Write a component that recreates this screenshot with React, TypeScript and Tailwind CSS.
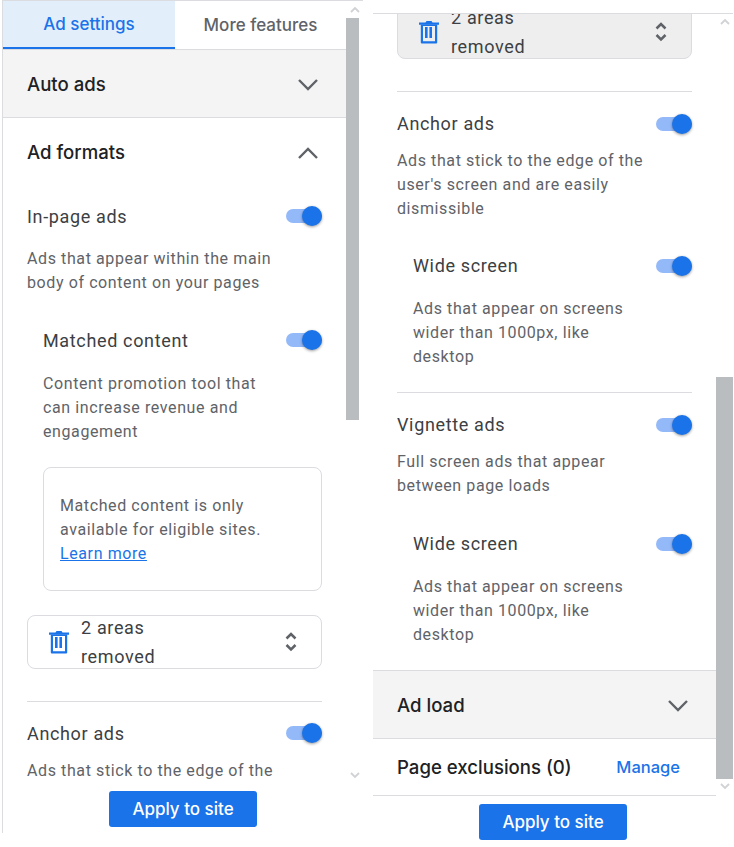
const heading = "font-['Inter',sans-serif] text-[18.6px] font-medium text-[#202124]"

function Chevron({ up = false }: { up?: boolean }) {
  return (
    <svg width="24" height="24" viewBox="0 0 24 24" fill="none" stroke="#5f6368" strokeWidth="2.4">
      <path d={up ? 'M3 17l9-9 9 9' : 'M3 8l9 9 9-9'} />
    </svg>
  )
}

function Toggle() {
  return (
    <div className="relative h-[14px] w-[36px] shrink-0 rounded-full bg-[#94b9f9]">
      <div className="absolute left-[16px] top-[-3px] h-[20px] w-[20px] rounded-full bg-[#1a73e8] shadow-[0_1px_3px_rgba(0,0,0,0.4)]" />
    </div>
  )
}

function ToggleRow({ label, className = '' }: { label: string; className?: string }) {
  return (
    <div className={`flex items-center justify-between font-['Roboto',sans-serif] text-[18px] tracking-[0.65px] text-[#3c4043] ${className}`}>
      <span>{label}</span>
      <Toggle />
    </div>
  )
}

function Desc({ children, className = '' }: { children: React.ReactNode; className?: string }) {
  return (
    <p className={`font-['Roboto',sans-serif] text-[16px] leading-[24px] tracking-[0.6px] text-[#5f6368] ${className}`}>
      {children}
    </p>
  )
}

function AreasSelect({ className = '' }: { className?: string }) {
  return (
    <div className={`flex h-[54px] items-center overflow-hidden rounded-[8px] border border-[#dadce0] pl-[20px] pr-[24px] ${className}`}>
      <svg width="22" height="24" viewBox="0 0 22 24" className="shrink-0" fill="#1a73e8">
        <path d="M1 2.500h6.500L8.500 1h5l1 1.500H21v2.200H1z" />
        <path d="M2.800 4.500h16.400V22.500a1 1 0 0 1-1 1H3.800a1 1 0 0 1-1-1zM5 6V21.300h12V6z" fillRule="evenodd" />
        <path d="M7 7h2.600v11H7zM11.400 7h2.600v11h-2.600z" />
      </svg>
      <div className="ml-[11px] w-[110px] font-['Roboto',sans-serif] text-[18px] leading-[29px] tracking-[0.65px] text-[#3c4043]">
        2 areas removed
      </div>
      <svg width="12" height="20" viewBox="0 0 12 20" className="ml-auto shrink-0" fill="none" stroke="#5f6368" strokeWidth="2.500">
        <path d="M1.500 6.500L6 2l4.500 4.500M1.500 13L6 17.500 10.500 13" />
      </svg>
    </div>
  )
}

function ApplyButton() {
  return (
    <button className="flex h-[36px] w-[148px] items-center justify-center rounded-[3px] bg-[#1a73e8] pt-[1px] font-['Inter',sans-serif] text-[17px] font-medium text-white">
      Apply to site
    </button>
  )
}

function Arrow({ up = false }: { up?: boolean }) {
  return (
    <svg width="12" height="8" viewBox="0 0 12 8" fill="none" stroke="#d0d2d5" strokeWidth="1.800">
      <path d={up ? 'M2 6l4-4 4 4' : 'M2 2l4 4 4-4'} />
    </svg>
  )
}

function LeftPanel() {
  return (
    <div className="ml-[2px] flex h-[833px] w-[361px] flex-col border-l border-t border-[#dadce0]">
      <div className="flex h-[782px] overflow-hidden">
        <div className="w-[343px] shrink-0">
          <div className="flex h-[49px] border-b border-[#dadce0] font-['Inter',sans-serif] text-[17px] font-medium">
            <div className="flex w-[172px] items-center justify-center border-b-2 border-[#1a73e8] bg-[#e3eefb] pt-[2px] text-[#1a73e8]">Ad settings</div>
            <div className="flex flex-1 items-center justify-center pt-[2px] text-[#5f6368]">More features</div>
          </div>
          <div className={`flex h-[68px] items-center justify-between border-b border-[#dadce0] bg-[#f4f4f4] pl-[24px] pr-[26px] ${heading}`}>
            <span className="pt-[2px]">Auto ads</span>
            <Chevron />
          </div>
          <div className="px-[24px]">
            <div className={`flex items-center justify-between pr-[2px] pt-[21px] ${heading}`}>
              <span>Ad formats</span>
              <Chevron up />
            </div>
            <ToggleRow label="In-page ads" className="mt-[36px]" />
            <Desc className="mt-[17px] pr-[24px]">Ads that appear within the main body of content on your pages</Desc>
            <div className="pl-[16px]">
              <ToggleRow label="Matched content" className="mt-[32px]" />
              <Desc className="mt-[18px] pr-[50px]">Content promotion tool that can increase revenue and engagement</Desc>
              <div className="mt-[23px] h-[124px] rounded-[8px] border border-[#dadce0] px-[16px] pt-[26px]">
                <Desc className="pr-[30px]">
                  Matched content is only available for eligible sites.{' '}
                  <span className="text-[#1a73e8] underline">Learn more</span>
                </Desc>
              </div>
            </div>
            <AreasSelect className="mt-[24px]" />
            <div className="mt-[32px] border-t border-[#dadce0]" />
            <ToggleRow label="Anchor ads" className="mt-[18px]" />
            <Desc className="mt-[12px]">Ads that stick to the edge of the</Desc>
          </div>
        </div>
        <div className="flex w-[17px] shrink-0 flex-col items-center">
          <div className="flex h-[17px] items-center"><Arrow up /></div>
          <div className="h-[402px] w-[13px] shrink-0 self-start bg-[#babdc0]" />
          <div className="mt-[351px]"><Arrow /></div>
        </div>
      </div>
      <div className="flex justify-center pt-[8px]">
        <ApplyButton />
      </div>
    </div>
  )
}

function RightPanel() {
  return (
    <div className="ml-[10px] mt-[13px] flex w-[360px] flex-col border-t border-[#dadce0]">
      <div className="flex h-[782px] overflow-hidden">
        <div className="w-[343px] shrink-0">
          <div className="h-[656px] overflow-hidden px-[24px]">
            <AreasSelect className="-mt-[9px] bg-[#eeeeee]" />
            <div className="mt-[32px] border-t border-[#dadce0]" />
            <ToggleRow label="Anchor ads" className="mt-[18px]" />
            <Desc className="mt-[12px] pr-[45px]">Ads that stick to the edge of the user's screen and are easily dismissible</Desc>
            <div className="pl-[16px]">
              <ToggleRow label="Wide screen" className="mt-[31px]" />
              <Desc className="mt-[18px] pr-[60px]">Ads that appear on screens wider than 1000px, like desktop</Desc>
            </div>
            <div className="mt-[23px] border-t border-[#dadce0]" />
            <ToggleRow label="Vignette ads" className="mt-[18px]" />
            <Desc className="mt-[12px] pr-[60px]">Full screen ads that appear between page loads</Desc>
            <div className="pl-[16px]">
              <ToggleRow label="Wide screen" className="mt-[32px]" />
              <Desc className="mt-[18px] pr-[60px]">Ads that appear on screens wider than 1000px, like desktop</Desc>
            </div>
          </div>
          <div className={`flex h-[69px] items-center justify-between border-y border-[#dadce0] bg-[#f4f4f4] pl-[24px] pr-[26px] ${heading}`}>
            <span className="pt-[2px]">Ad load</span>
            <Chevron />
          </div>
          <div className={`flex h-[57px] items-center justify-between border-b border-[#dadce0] pl-[24px] pr-[36px] ${heading}`}>
            <span className="pt-[2px]">Page exclusions (0)</span>
            <span className="text-[16.5px] text-[#1a73e8]">Manage</span>
          </div>
        </div>
        <div className="flex w-[17px] shrink-0 flex-col items-center">
          <div className="flex h-[16px] items-center"><Arrow up /></div>
          <div className="mt-[347px] h-[402px] w-full shrink-0 bg-[#babdc0]" />
          <div className="mt-[3px]"><Arrow /></div>
        </div>
      </div>
      <div className="flex justify-center pt-[8px]">
        <ApplyButton />
      </div>
    </div>
  )
}

export default function App() {
  return (
    <div className="flex h-[847px] w-[734px] overflow-hidden bg-white">
      <LeftPanel />
      <RightPanel />
    </div>
  )
}
